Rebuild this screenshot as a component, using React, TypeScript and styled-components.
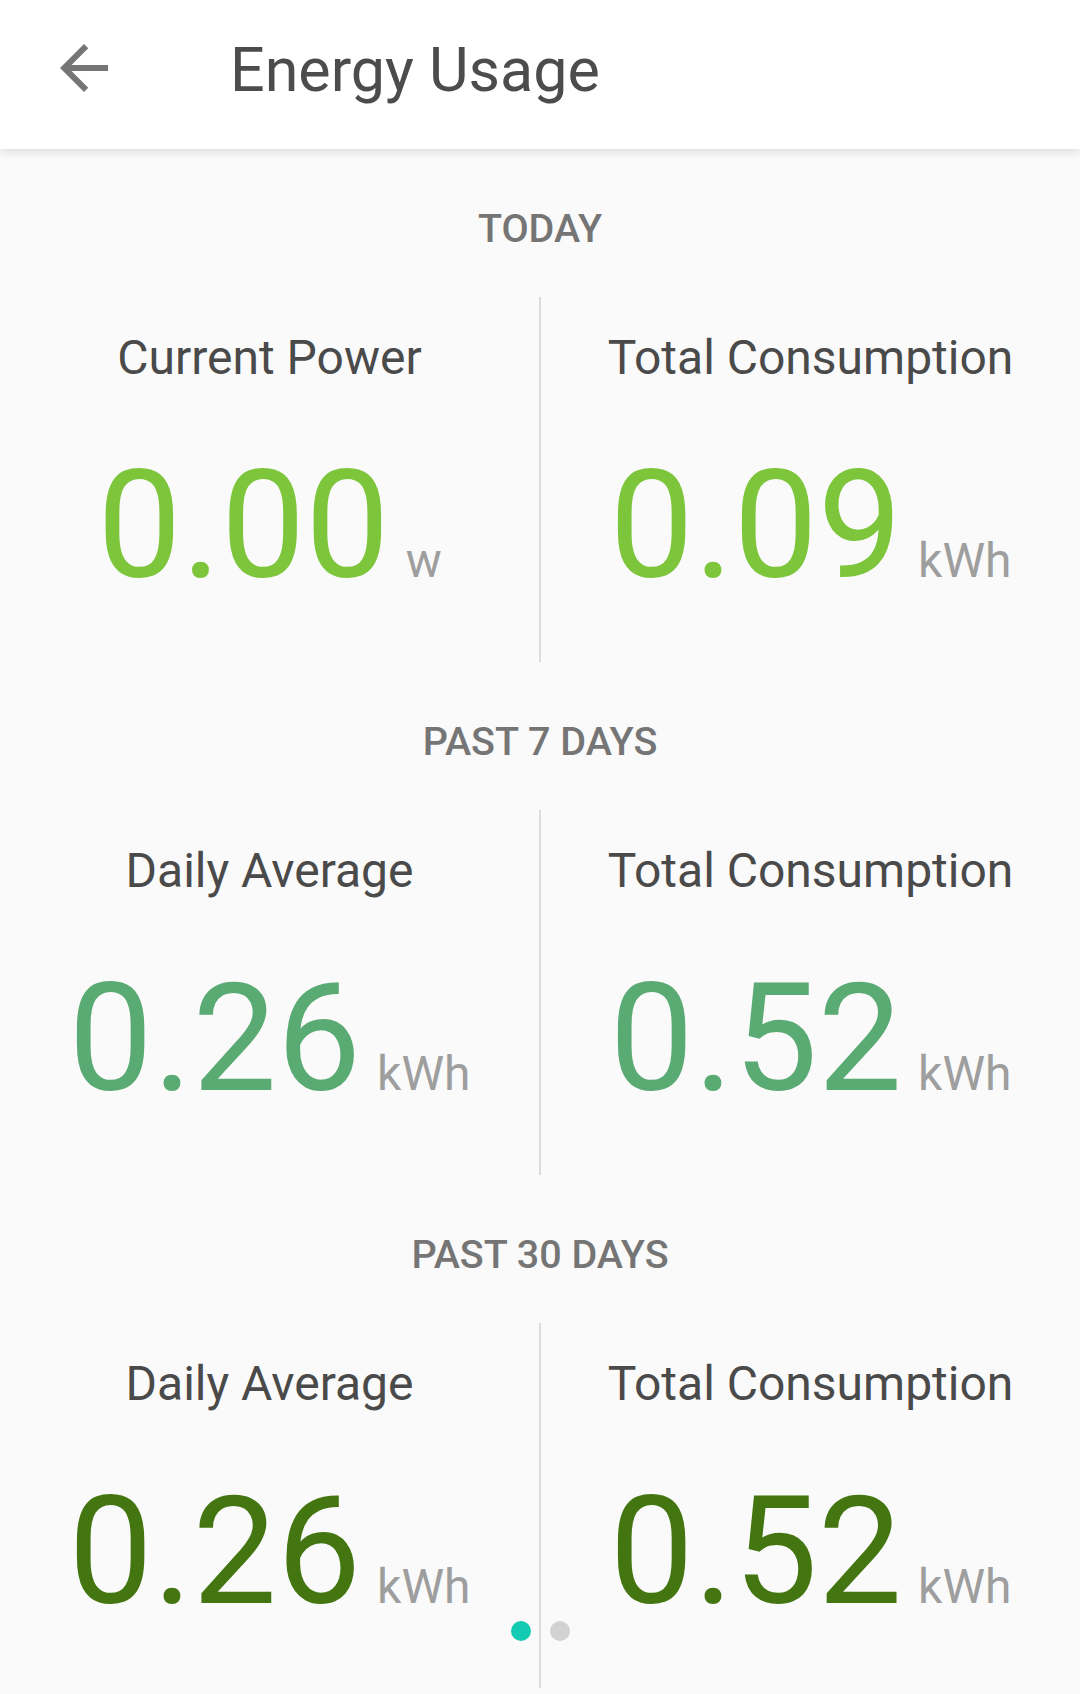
import styled, { createGlobalStyle } from "styled-components";

type Stat = {
  label: string;
  value: string;
  unit: string;
};

type Period = {
  title: string;
  color: string;
  stats: Stat[];
};

const periods: Period[] = [
  {
    title: "TODAY",
    color: "#7dc63c",
    stats: [
      { label: "Current Power", value: "0.00", unit: "w" },
      { label: "Total Consumption", value: "0.09", unit: "kWh" },
    ],
  },
  {
    title: "PAST 7 DAYS",
    color: "#5aaa73",
    stats: [
      { label: "Daily Average", value: "0.26", unit: "kWh" },
      { label: "Total Consumption", value: "0.52", unit: "kWh" },
    ],
  },
  {
    title: "PAST 30 DAYS",
    color: "#437610",
    stats: [
      { label: "Daily Average", value: "0.26", unit: "kWh" },
      { label: "Total Consumption", value: "0.52", unit: "kWh" },
    ],
  },
];

const GlobalStyle = createGlobalStyle`
  html, body {
    margin: 0;
    padding: 0;
    background: #fafafa;
  }
  body {
    font-family: Roboto, "Noto Sans", "Liberation Sans", sans-serif;
  }
`;

const Screen = styled.div`
  position: relative;
  width: 1080px;
  height: 1694px;
  overflow: hidden;
  background: #fafafa;
`;

const AppBar = styled.header`
  position: relative;
  z-index: 1;
  height: 149px;
  display: flex;
  align-items: flex-start;
  gap: 110px;
  padding-left: 48px;
  box-sizing: border-box;
  background: #ffffff;
  box-shadow: 0 2px 10px rgba(0, 0, 0, 0.14);
`;

const BackButton = styled.button`
  margin-top: 32px;
  width: 72px;
  height: 72px;
  padding: 0;
  border: none;
  background: transparent;
  display: flex;
  align-items: center;
  justify-content: center;
  cursor: pointer;
`;

const Title = styled.h1`
  margin: 40px 0 0;
  font-size: 61px;
  line-height: 60px;
  font-weight: 400;
  color: #4c4c4c;
`;

const Section = styled.section`
  padding-top: 56px;
`;

const SectionTitle = styled.div`
  height: 48px;
  line-height: 48px;
  text-align: center;
  font-size: 39.5px;
  font-weight: 500;
  color: #757575;
`;

const StatRow = styled.div`
  margin-top: 44px;
  height: 365px;
  display: grid;
  grid-template-columns: 1fr 2px 1fr;
`;

const Divider = styled.div`
  background: #dcdcdc;
`;

const StatCell = styled.div`
  padding-top: 33px;
  display: flex;
  flex-direction: column;
  align-items: center;
`;

const StatLabel = styled.div`
  font-size: 48px;
  line-height: 56px;
  color: #4a4a4a;
`;

const ValueLine = styled.div`
  margin-top: 65px;
  display: flex;
  align-items: baseline;
  gap: 16px;
`;

const Value = styled.span<{ $color: string }>`
  font-size: 150px;
  line-height: 150px;
  font-weight: 400;
  color: ${(p) => p.$color};
`;

const Unit = styled.span`
  font-size: 48px;
  color: #9e9e9e;
`;

const Pager = styled.div`
  position: absolute;
  left: 0;
  right: 0;
  bottom: 53px;
  display: flex;
  justify-content: center;
  gap: 19px;
`;

const Dot = styled.span<{ $active?: boolean }>`
  width: 20px;
  height: 20px;
  border-radius: 50%;
  background: ${(p) => (p.$active ? "#13cbb3" : "#d2d2d2")};
`;

function ArrowBack() {
  return (
    <svg width="72" height="72" viewBox="0 0 24 24" fill="#757575">
      <path d="M20 11H7.83l5.59-5.59L12 4l-8 8 8 8 1.41-1.41L7.83 13H20v-2z" />
    </svg>
  );
}

function StatBlock({ stat, color }: { stat: Stat; color: string }) {
  return (
    <StatCell>
      <StatLabel>{stat.label}</StatLabel>
      <ValueLine>
        <Value $color={color}>{stat.value}</Value>
        <Unit>{stat.unit}</Unit>
      </ValueLine>
    </StatCell>
  );
}

export default function App() {
  return (
    <Screen>
      <GlobalStyle />
      <AppBar>
        <BackButton aria-label="Back">
          <ArrowBack />
        </BackButton>
        <Title>Energy Usage</Title>
      </AppBar>
      {periods.map((period) => (
        <Section key={period.title}>
          <SectionTitle>{period.title}</SectionTitle>
          <StatRow>
            <StatBlock stat={period.stats[0]} color={period.color} />
            <Divider />
            <StatBlock stat={period.stats[1]} color={period.color} />
          </StatRow>
        </Section>
      ))}
      <Pager>
        <Dot $active />
        <Dot />
      </Pager>
    </Screen>
  );
}
